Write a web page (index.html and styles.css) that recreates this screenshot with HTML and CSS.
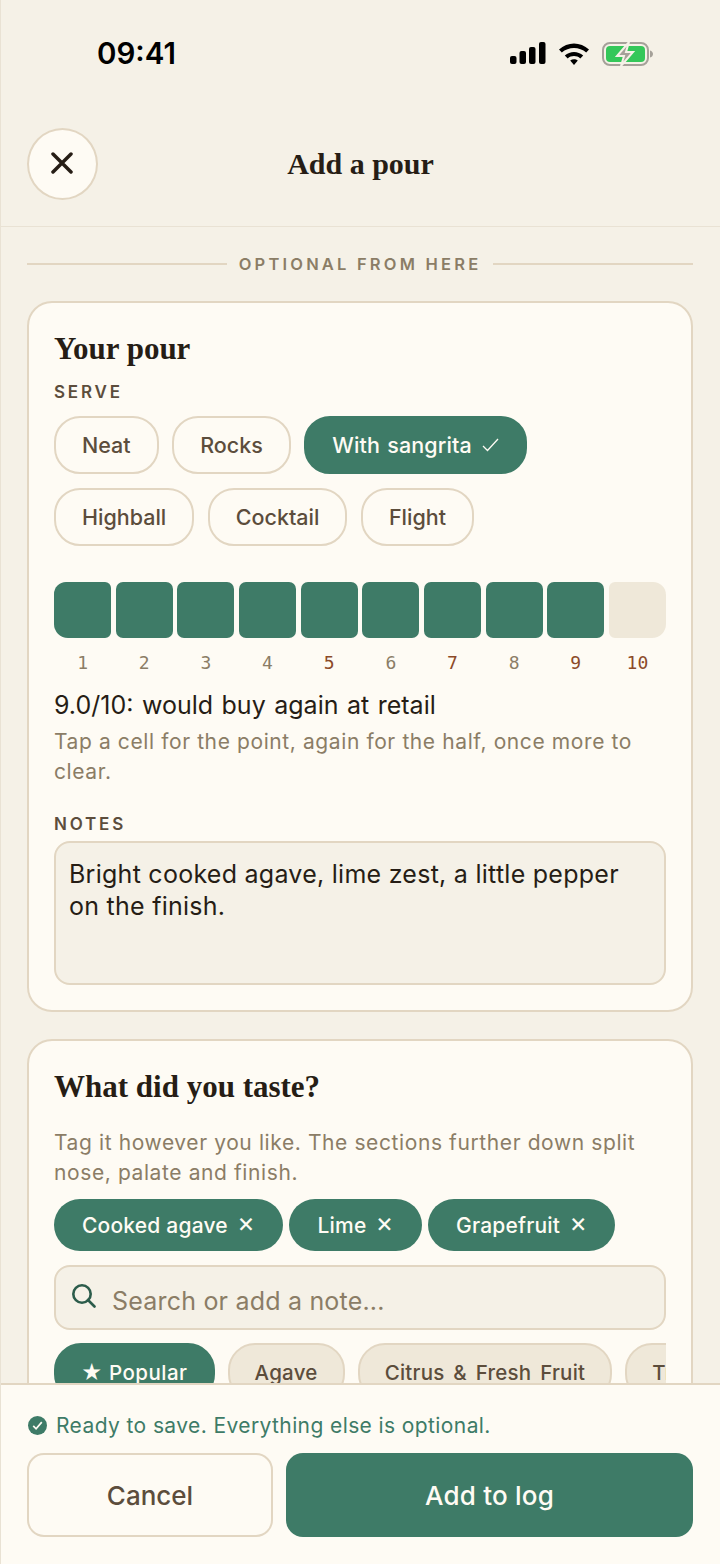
FILE: index.html
```html
<!DOCTYPE html>
<html lang="en">
<head>
  <meta charset="UTF-8" />
  <meta name="viewport" content="width=device-width, initial-scale=1" />
  <title>Add a pour</title>
  <link rel="stylesheet" href="styles.css">
</head>
<body>
  <div class="screen">
    <div class="status">
      <span class="time">09:41</span>
      <div class="status-icons">
        <svg width="36" height="22" viewBox="0 0 36 22"><rect x="0" y="14" width="6.500" height="8" rx="2"/><rect x="9.500" y="9" width="6.500" height="13" rx="2"/><rect x="19" y="5" width="6.500" height="17" rx="2"/><rect x="29" y="0" width="6.500" height="22" rx="2"/></svg>
        <svg width="32" height="23" viewBox="0 0 32 23"><path d="M1 7.500C9.500-.5 22.500-.5 31 7.500l-2.800 3C21.500 4.500 10.500 4.500 3.800 10.500z"/><path d="M6.800 13.500c5.300-4.800 13.100-4.800 18.400 0l-2.900 3c-3.600-3.200-9-3.200-12.600 0z"/><path d="M12.200 18.500c2.200-1.800 5.400-1.800 7.600 0L16 23z"/></svg>
        <svg width="51" height="24" viewBox="0 0 51 24"><rect x="1" y="1" width="45" height="22" rx="7" fill="none" stroke="#a5a199" stroke-width="2"/><path d="M48 8.500c2 .5 3 2 3 3.500s-1 3-3 3.500z" fill="#a5a199"/><rect x="4" y="4" width="39" height="16" rx="4" fill="#34c759"/><path d="M27 0 15 14h7l-3 10 12-14h-7z" fill="#a5a199" stroke="#f5f1e7" stroke-width="2"/></svg>
      </div>
    </div>

    <header class="topbar">
      <button class="close">
        <svg width="22" height="22" viewBox="0 0 22 22"><path d="M2 2l18 18M20 2 2 20" fill="none" stroke="#261d15" stroke-width="3.500" stroke-linecap="round"/></svg>
      </button>
      <h1>Add a pour</h1>
    </header>

    <main class="content">
      <div class="divider"><span>OPTIONAL FROM HERE</span></div>

      <section class="card pour">
        <h2>Your pour</h2>
        <div class="label">SERVE</div>
        <div class="chips">
          <span class="chip">Neat</span>
          <span class="chip">Rocks</span>
          <span class="chip on">With sangrita <svg class="tick" width="17" height="14" viewBox="0 0 17 14"><path d="M1 8l4.500 4.500L16 1" fill="none" stroke="#fffbf4" stroke-width="1.300"/></svg></span>
          <span class="chip">Highball</span>
          <span class="chip">Cocktail</span>
          <span class="chip">Flight</span>
        </div>

        <div class="cells">
          <i class="cell first"></i><i class="cell"></i><i class="cell"></i><i class="cell"></i><i class="cell"></i>
          <i class="cell"></i><i class="cell"></i><i class="cell"></i><i class="cell"></i><i class="cell last"></i>
        </div>
        <div class="nums">
          <span>1</span><span>2</span><span>3</span><span>4</span><span class="hot">5</span>
          <span>6</span><span class="hot">7</span><span>8</span><span class="hot">9</span><span class="hot">10</span>
        </div>
        <p class="score">9.0/10: would buy again at retail</p>
        <p class="hint">Tap a cell for the point, again for the half, once more to clear.</p>

        <div class="label notes-label">NOTES</div>
        <div class="notes">Bright cooked agave, lime zest, a little pepper on the finish.</div>
      </section>

      <section class="card taste">
        <h2>What did you taste?</h2>
        <p class="hint">Tag it however you like. The sections further down split nose, palate and finish.</p>
        <div class="tags">
          <span class="tag">Cooked agave <b>×</b></span>
          <span class="tag">Lime <b>×</b></span>
          <span class="tag">Grapefruit <b>×</b></span>
        </div>
        <div class="search">
          <svg width="24" height="24" viewBox="0 0 24 24"><circle cx="10" cy="10" r="8.700" fill="none" stroke="#2c5c4b" stroke-width="2.600"/><path d="M16 16l6.500 6.500" stroke="#2c5c4b" stroke-width="2.600" stroke-linecap="round"/></svg>
          <span>Search or add a note...</span>
        </div>
        <div class="cats">
          <span class="cat on">★ Popular</span>
          <span class="cat">Agave</span>
          <span class="cat">Citrus &amp; Fresh Fruit</span>
          <span class="cat">Tropical</span>
        </div>
      </section>
    </main>

    <footer class="savebar">
      <div class="ready">
        <svg width="19" height="19" viewBox="0 0 20 20"><circle cx="10" cy="10" r="10" fill="#3e7b67"/><path d="M5.500 10.500l3 3 6-7" fill="none" stroke="#fffbf4" stroke-width="1.800"/></svg>
        <span>Ready to save. Everything else is optional.</span>
      </div>
      <div class="actions">
        <button class="btn cancel">Cancel</button>
        <button class="btn save">Add to log</button>
      </div>
    </footer>
  </div>
</body>
</html>
```

FILE: styles.css
```css
* {
  box-sizing: border-box;
}
html, body {
  margin: 0;
  height: 100%;
}
body {
  font-family: Inter, "Noto Sans", sans-serif;
  background-color: #f5f1e7;
  color: #261d15;
}
.screen {
  height: 1564px;
  display: flex;
  flex-direction: column;
  overflow: hidden;
  border-left: 1px solid #e9e2d4;
}
.status {
  height: 100px;
  flex: none;
  display: flex;
  justify-content: space-between;
  padding: 36px 67px 0 96px;
}
.time {
  font-size: 29.500px;
  line-height: 35px;
  font-weight: 600;
  color: #000;
}
.status-icons {
  display: flex;
  align-items: flex-start;
  gap: 12px;
  padding-top: 6px;
}
.topbar {
  height: 127px;
  flex: none;
  display: flex;
  align-items: flex-start;
  padding: 28px 26px 0;
  border-bottom: 1px solid #e9e2d4;
}
.close {
  width: 71px;
  height: 72px;
  flex: none;
  border-radius: 50%;
  border: 2px solid #e2d6c2;
  background-color: #fefbf4;
  display: flex;
  align-items: center;
  justify-content: center;
  padding: 0 2px 2px 0;
}
h1 {
  flex: 1;
  margin: 0 71px 0 0;
  text-align: center;
  font-family: "Liberation Serif", serif;
  font-size: 30px;
  line-height: 72px;
  font-weight: 700;
}
.content {
  flex: 1;
  min-height: 0;
  overflow: hidden;
  padding: 0 27px 0 26px;
}
.divider {
  display: flex;
  align-items: center;
  gap: 12px;
  height: 74px;
  font-size: 16.500px;
  font-weight: 600;
  letter-spacing: 3.200px;
  color: #8b7d66;
}
.divider::before,
.divider::after {
  content: "";
  flex: 1;
  height: 2px;
  background-color: #e2d6c2;
}
.card {
  background-color: #fefbf4;
  border: 2px solid #e2d6c2;
  border-radius: 25px;
  padding: 25px;
  margin-bottom: 27px;
}
.pour {
  height: 711px;
}
h2 {
  margin: 0;
  font-family: "Liberation Serif", serif;
  font-size: 31px;
  line-height: 42px;
  font-weight: 700;
}
.label {
  font-size: 17px;
  line-height: 22px;
  font-weight: 600;
  letter-spacing: 2.800px;
  color: #5c4d3c;
  margin-top: 11px;
}
.chips {
  display: flex;
  flex-wrap: wrap;
  gap: 14px 13.500px;
  margin-top: 13px;
}
.chip {
  height: 58px;
  display: flex;
  align-items: center;
  gap: 10px;
  padding: 0 26px;
  border: 2px solid #e2d6c2;
  border-radius: 26px;
  font-size: 21.500px;
  font-weight: 450;
  color: #5c4d3c;
}
.chip.on {
  background-color: #3e7b67;
  border-color: #3e7b67;
  color: #fffbf4;
  word-spacing: 1.500px;
  letter-spacing: 0.100px;
}
.cells {
  display: grid;
  grid-template-columns: repeat(10, 1fr);
  gap: 4.500px;
  margin-top: 36px;
}
.cell {
  height: 56px;
  background-color: #3e7b67;
  border-radius: 7px;
}
.first {
  border-radius: 12px 6px 6px 14px;
}
.last {
  background-color: #efe8d9;
  border-radius: 6px 13px 14px 6px;
}
.nums {
  display: grid;
  grid-template-columns: repeat(10, 1fr);
  gap: 4.500px;
  margin-top: 14px;
  font-family: "DejaVu Sans Mono", monospace;
  font-size: 18px;
  line-height: 22px;
  text-align: center;
  color: #8b7d66;
}
.hot {
  color: #8c4a28;
}
.score {
  margin: 15px 0 0;
  font-size: 25px;
  line-height: 32px;
  word-spacing: 1.500px;
}
.hint {
  margin: 6px 0 0;
  font-size: 21px;
  line-height: 30px;
  letter-spacing: 0.600px;
  color: #8b7d66;
}
.notes-label {
  margin-top: 26px;
}
.notes {
  height: 144px;
  margin-top: 6px;
  padding: 15px 14px 15px 13px;
  background-color: #f5f1e7;
  border: 2px solid #e2d6c2;
  border-radius: 16px;
  font-size: 25px;
  line-height: 32px;
  letter-spacing: 0.260px;
}
.taste .hint {
  margin-top: 20px;
}
.tags {
  display: flex;
  gap: 6.500px;
  margin-top: 11px;
}
.tag {
  height: 52px;
  display: flex;
  align-items: center;
  gap: 9px;
  padding: 0 28px;
  border-radius: 26px;
  background-color: #3e7b67;
  color: #fffbf4;
  font-size: 21px;
  font-weight: 450;
  letter-spacing: 0.200px;
}
.tag b {
  font-weight: 400;
  font-size: 27px;
  line-height: 20px;
  margin-top: -5px;
}
.search {
  height: 65px;
  margin-top: 14px;
  display: flex;
  align-items: center;
  gap: 16px;
  padding: 0 16px;
  background-color: #f5f1e7;
  border: 2px solid #e2d6c2;
  border-radius: 16px;
  font-size: 25px;
  letter-spacing: 0.200px;
  color: #8b7d66;
}
.search svg {
  margin-bottom: 3px;
}
.search span {
  padding-top: 7px;
}
.cats {
  display: flex;
  gap: 13px;
  margin-top: 13px;
  overflow: hidden;
}
.cat {
  height: 58px;
  flex: none;
  padding: 15px 25px;
  border: 2px solid #e2d6c2;
  border-radius: 27px;
  background-color: #efe8d9;
  font-size: 20.500px;
  font-weight: 450;
  letter-spacing: 0.250px;
  word-spacing: 3px;
  color: #5c4d3c;
}
.cat.on {
  background-color: #3e7b67;
  border-color: #3e7b67;
  color: #fffbf4;
  letter-spacing: 0.500px;
  word-spacing: 0;
}
.savebar {
  height: 181px;
  flex: none;
  margin-left: -1px;
  padding: 0 27px;
  background-color: #fefbf4;
  border-top: 2px solid #e2d6c2;
}
.ready {
  display: flex;
  align-items: center;
  gap: 9px;
  height: 68px;
  padding: 13px 0 0 1px;
  font-size: 21px;
  letter-spacing: 0.400px;
  color: #3e7b67;
}
.actions {
  display: flex;
  gap: 13px;
}
.btn {
  height: 84px;
  border-radius: 17px;
  font-family: inherit;
  font-size: 26px;
  font-weight: 500;
}
.cancel {
  width: 246px;
  background-color: #fefbf4;
  border: 2px solid #e2d6c2;
  color: #5c4d3c;
  font-weight: 550;
}
.save {
  flex: 1;
  background-color: #3e7b67;
  border: none;
  color: #fffbf4;
  letter-spacing: 0.200px;
}
```
